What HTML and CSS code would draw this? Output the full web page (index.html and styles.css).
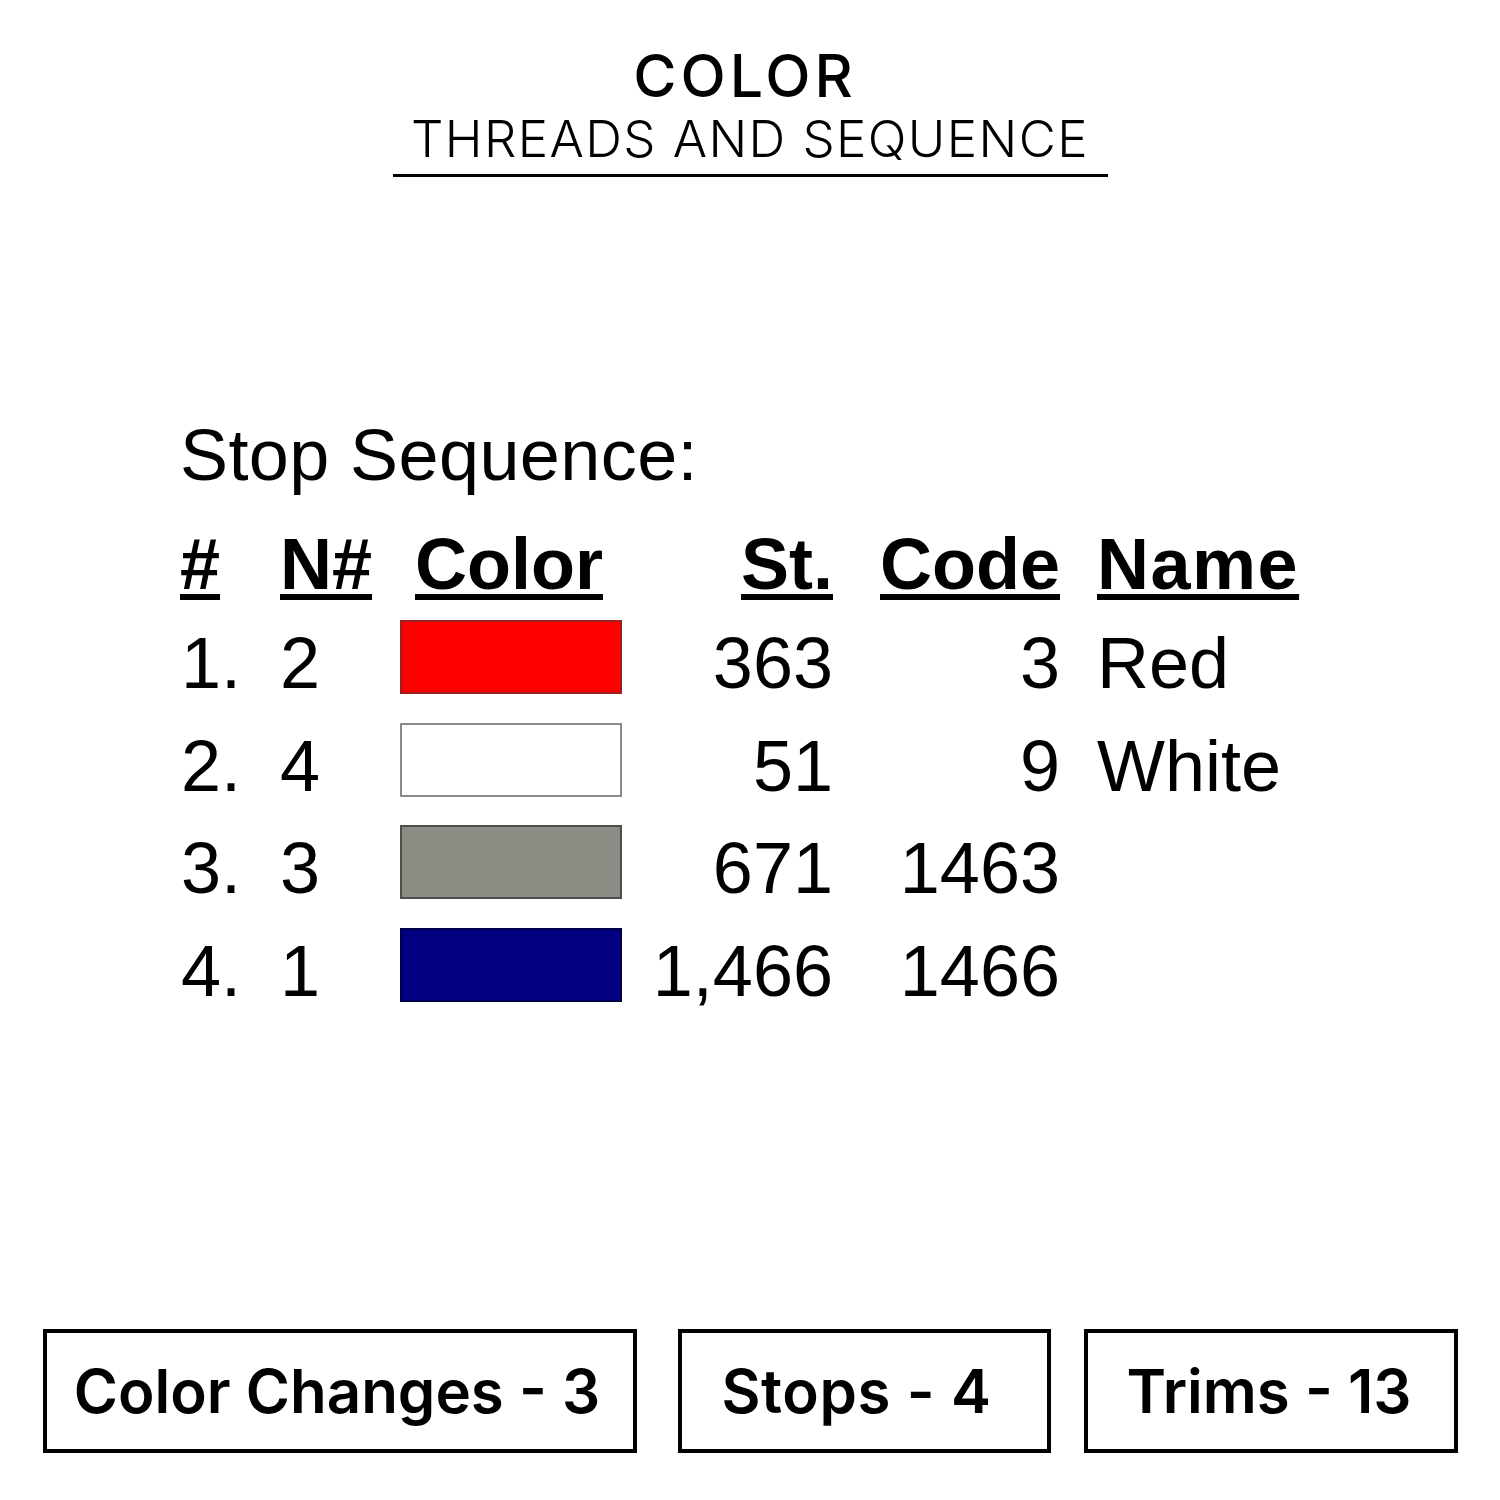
FILE: index.html
```html
<!DOCTYPE html>
<html lang="en">
<head>
<meta charset="utf-8">
<title>Color - Threads and Sequence</title>
<link rel="stylesheet" href="styles.css">
</head>
<body>
<header class="heading">
  <h1 class="heading-title">COLOR</h1>
  <h2 class="heading-sub">THREADS AND SEQUENCE</h2>
</header>

<section class="seq">
  <div class="seq-title">Stop Sequence:</div>
  <div class="seq-table">
    <div class="th c-num"><span>#</span></div>
    <div class="th c-n"><span>N#</span></div>
    <div class="th c-color"><span>Color</span></div>
    <div class="th c-st"><span>St.</span></div>
    <div class="th c-code"><span>Code</span></div>
    <div class="th c-name"><span>Name</span></div>

    <div class="td c-num">1.</div>
    <div class="td c-n">2</div>
    <div class="td c-color"><div class="swatch sw-red"></div></div>
    <div class="td c-st">363</div>
    <div class="td c-code">3</div>
    <div class="td c-name">Red</div>

    <div class="td c-num">2.</div>
    <div class="td c-n">4</div>
    <div class="td c-color"><div class="swatch sw-white"></div></div>
    <div class="td c-st">51</div>
    <div class="td c-code">9</div>
    <div class="td c-name">White</div>

    <div class="td c-num">3.</div>
    <div class="td c-n">3</div>
    <div class="td c-color"><div class="swatch sw-gray"></div></div>
    <div class="td c-st">671</div>
    <div class="td c-code">1463</div>
    <div class="td c-name"></div>

    <div class="td c-num">4.</div>
    <div class="td c-n">1</div>
    <div class="td c-color"><div class="swatch sw-blue"></div></div>
    <div class="td c-st">1,466</div>
    <div class="td c-code">1466</div>
    <div class="td c-name"></div>
  </div>
</section>

<footer class="stats">
  <div class="stat stat-wide">Color Changes - 3</div>
  <div class="stat stat-mid">Stops - 4</div>
  <div class="stat stat-last">Trims - 13</div>
</footer>
</body>
</html>
```

FILE: styles.css
```css
* { box-sizing: border-box; }

html, body {
  margin: 0;
  padding: 0;
  background: #ffffff;
  color: #000000;
}

body {
  width: 1500px;
  height: 1500px;
  overflow: hidden;
}

.heading {
  width: 715px;
  margin: 46px auto 0;
  padding-bottom: 9px;
  border-bottom: 3px solid #000;
  text-align: center;
  font-family: Inter, "DejaVu Sans", sans-serif;
}

.heading-title {
  margin: 0;
  padding-right: 10px;
  font-size: 59px;
  line-height: 60px;
  font-weight: 500;
  letter-spacing: 4px;
}

.heading-sub {
  margin: 7px 0 0;
  font-size: 51px;
  line-height: 52px;
  font-weight: 300;
  letter-spacing: 1.4px;
}

.seq {
  margin: 235px 0 0 180px;
  font-family: "Liberation Sans", Arial, sans-serif;
  font-size: 72px;
}

.seq-title {
  line-height: 86px;
  letter-spacing: 0.4px;
}

.seq-table {
  margin-top: 18px;
  display: grid;
  grid-template-columns: 100px 120px 240px 193px 227px 1fr;
  grid-template-rows: 96px repeat(4, 102.5px);
  line-height: 102px;
}

.th {
  font-weight: bold;
  line-height: 96px;
}

.th span {
  text-decoration: underline;
  text-decoration-thickness: 6px;
  text-underline-offset: 5px;
}

.c-st, .c-code { text-align: right; }
.th.c-color { padding-left: 15px; }
.th.c-name span { letter-spacing: 1.5px; }
.c-name { padding-left: 37px; }
.td.c-num { padding-left: 1px; }

.td.c-color {
  display: flex;
  align-items: flex-start;
}

.swatch {
  width: 222px;
  height: 74px;
  margin-top: 8px;
  border: 2px solid #555;
}

.sw-red { background: #ff0000; border-color: #9a2020; }
.sw-white { background: #ffffff; border-color: #8a8a8a; }
.sw-gray { background: #8b8d85; border-color: #4e4f4b; }
.sw-blue { background: #000080; border-color: #00004a; }

.stats {
  display: flex;
  margin: 307px 0 0 43px;
  font-family: Inter, "DejaVu Sans", sans-serif;
  font-weight: 600;
  font-size: 60px;
}

.stat {
  height: 124px;
  border: 4px solid #000;
  line-height: 116px;
  text-align: center;
  white-space: nowrap;
}

.stat-wide { width: 594px; padding-right: 6px; }
.stat-mid { width: 373px; margin-left: 41px; padding-right: 16px; letter-spacing: 0.6px; }
.stat-last { width: 374px; margin-left: 33px; padding-right: 4px; }
```
